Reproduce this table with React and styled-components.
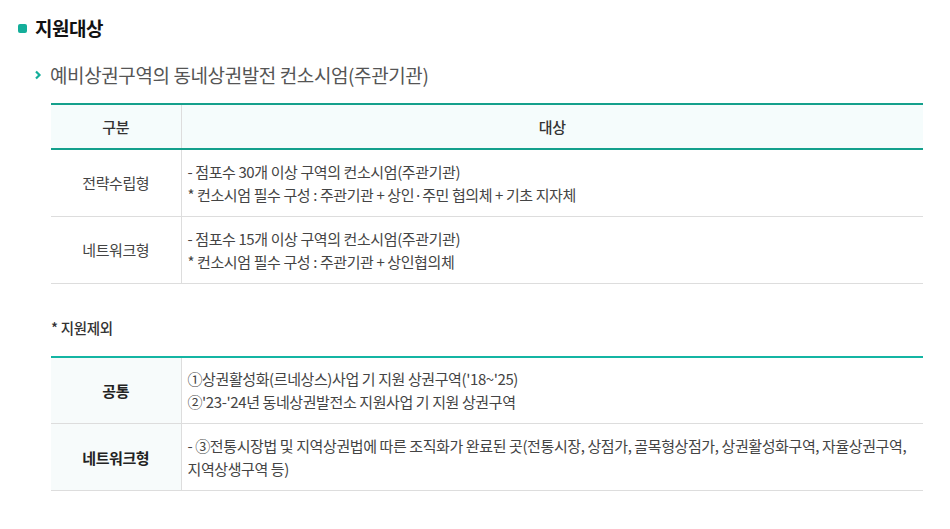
import React from 'react'
import styled, { createGlobalStyle } from 'styled-components'

const GlobalStyle = createGlobalStyle`
  body {
    margin: 0;
    background: #fff;
    font-family: 'Noto Sans CJK KR', 'Noto Sans', sans-serif;
    color: #333;
  }
`

const Page = styled.div`
  padding: 12px 27px 30px 18px;
`

const Title = styled.h2`
  display: flex;
  align-items: center;
  gap: 8px;
  margin: 0;
  font-size: 19px;
  font-weight: 700;
  color: #111;
  letter-spacing: -0.5px;
  line-height: 32px;
`

const Dot = styled.span`
  width: 9px;
  height: 9px;
  border-radius: 2px;
  background: #14ae9a;
`

const SubTitle = styled.h3`
  display: flex;
  align-items: center;
  gap: 8px;
  margin: 16px 0 0 16px;
  font-size: 19px;
  font-weight: 400;
  color: #555;
  letter-spacing: -0.4px;
  line-height: 30px;
`

const Section = styled.div`
  padding-left: 33px;
`

const Table = styled.table`
  width: 100%;
  border-collapse: collapse;
  border-top: 2px solid ${p => p.$line};
  margin-top: ${p => p.$top}px;
  font-size: 15px;
  letter-spacing: -0.4px;

  th, td {
    box-sizing: border-box;
    border-bottom: 1px solid #ddd;
  }
`

const Th = styled.th`
  height: 45px;
  background: #f5fcfc;
  font-weight: 500;
  color: #333;
  border-bottom: 2px solid #14a08c !important;
  border-left: ${p => (p.$first ? 'none' : '1px solid #ddd')};
  width: ${p => (p.$first ? '130px' : 'auto')};
`

const Label = styled.td`
  width: 130px;
  text-align: center;
  color: ${p => (p.$strong ? '#222' : '#444')};
  font-weight: ${p => (p.$strong ? 700 : 400)};
  background: ${p => (p.$shade ? '#f7fbfb' : '#fff')};
  border-right: 1px solid #ddd;
`

const Cell = styled.td`
  height: 67px;
  padding: 8px 6px;
  color: #444;
  line-height: 23px;
  vertical-align: middle;
`

const Note = styled.p`
  margin: 33px 0 0;
  font-size: 14.5px;
  font-weight: 500;
  color: #333;
  letter-spacing: -0.3px;
`

const Chevron = () => (
  <svg width="8" height="10" viewBox="0 0 8 10">
    <path d="M2 1.5 L5.5 5 L2 8.5" fill="none" stroke="#14ae9a" strokeWidth="2.2" />
  </svg>
)

export default function App() {
  return (
    <Page>
      <GlobalStyle />
      <Title><Dot />지원대상</Title>
      <SubTitle><Chevron />예비상권구역의 동네상권발전 컨소시엄(주관기관)</SubTitle>
      <Section>
        <Table $line="#14a08c" $top={13}>
          <thead>
            <tr>
              <Th $first>구분</Th>
              <Th>대상</Th>
            </tr>
          </thead>
          <tbody>
            <tr>
              <Label>전략수립형</Label>
              <Cell>
                - 점포수 30개 이상 구역의 컨소시엄(주관기관)<br />
                * 컨소시엄 필수 구성 : 주관기관 + 상인·주민 협의체 + 기초 지자체
              </Cell>
            </tr>
            <tr>
              <Label>네트워크형</Label>
              <Cell>
                - 점포수 15개 이상 구역의 컨소시엄(주관기관)<br />
                * 컨소시엄 필수 구성 : 주관기관 + 상인협의체
              </Cell>
            </tr>
          </tbody>
        </Table>
        <Note>* 지원제외</Note>
        <Table $line="#14b5a3" $top={18}>
          <tbody>
            <tr>
              <Label $strong $shade>공통</Label>
              <Cell>
                ①상권활성화(르네상스)사업 기 지원 상권구역('18~'25)<br />
                ②'23-'24년 동네상권발전소 지원사업 기 지원 상권구역
              </Cell>
            </tr>
            <tr>
              <Label $strong $shade>네트워크형</Label>
              <Cell>
                - ③전통시장법 및 지역상권법에 따른 조직화가 완료된 곳(전통시장, 상점가, 골목형상점가, 상권활성화구역, 자율상권구역, 지역상생구역 등)
              </Cell>
            </tr>
          </tbody>
        </Table>
      </Section>
    </Page>
  )
}
